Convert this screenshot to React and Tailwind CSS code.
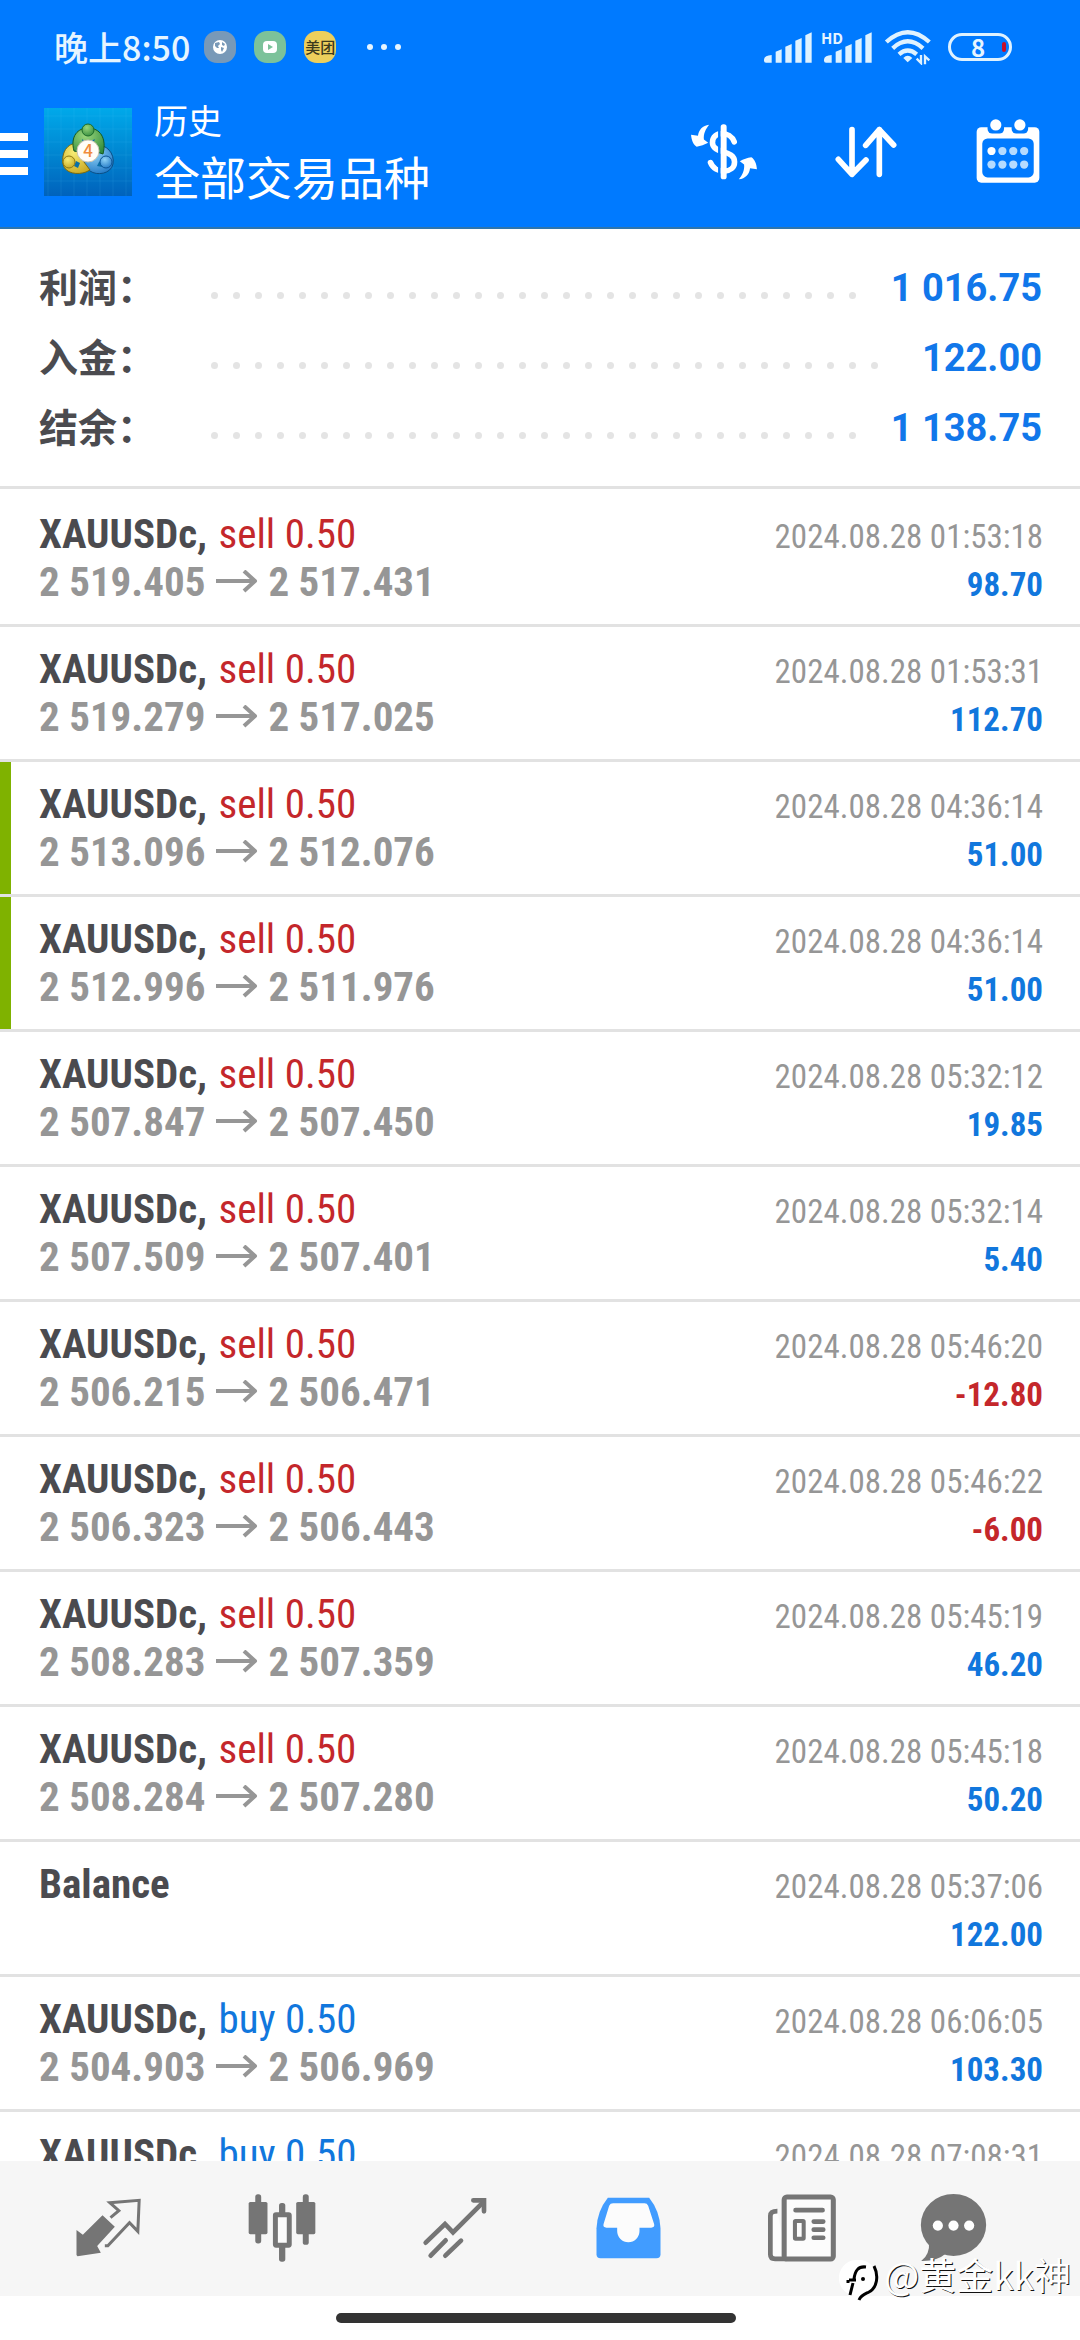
const deals = [
  { id: 1, side: "sell", open: "2 519.405", close: "2 517.431", time: "2024.08.28 01:53:18", profit: "98.70" },
  { id: 2, side: "sell", open: "2 519.279", close: "2 517.025", time: "2024.08.28 01:53:31", profit: "112.70" },
  { id: 3, side: "sell", open: "2 513.096", close: "2 512.076", time: "2024.08.28 04:36:14", profit: "51.00", marked: true },
  { id: 4, side: "sell", open: "2 512.996", close: "2 511.976", time: "2024.08.28 04:36:14", profit: "51.00", marked: true },
  { id: 5, side: "sell", open: "2 507.847", close: "2 507.450", time: "2024.08.28 05:32:12", profit: "19.85" },
  { id: 6, side: "sell", open: "2 507.509", close: "2 507.401", time: "2024.08.28 05:32:14", profit: "5.40" },
  { id: 7, side: "sell", open: "2 506.215", close: "2 506.471", time: "2024.08.28 05:46:20", profit: "-12.80" },
  { id: 8, side: "sell", open: "2 506.323", close: "2 506.443", time: "2024.08.28 05:46:22", profit: "-6.00" },
  { id: 9, side: "sell", open: "2 508.283", close: "2 507.359", time: "2024.08.28 05:45:19", profit: "46.20" },
  { id: 10, side: "sell", open: "2 508.284", close: "2 507.280", time: "2024.08.28 05:45:18", profit: "50.20" },
  { id: 11, side: "balance", time: "2024.08.28 05:37:06", profit: "122.00" },
  { id: 12, side: "buy", open: "2 504.903", close: "2 506.969", time: "2024.08.28 06:06:05", profit: "103.30" },
  { id: 13, side: "buy", time: "2024.08.28 07:08:31" },
];

const summary = [
  { label: "利润：", value: "1 016.75" },
  { label: "入金：", value: "122.00" },
  { label: "结余：", value: "1 138.75" },
];

// Status bar
function SignalIcon() {
  return (
    <svg viewBox="312 96 144 93" className="h-[31px] w-12" fill="#dff2ff">
      <path d="M335 188H318Q312 188 312 182V178Q314 166 335 165Z" />
      <path d="M347 188V155L365 148V188Z" />
      <path d="M376 188V140L395 132V188Z" />
      <path d="M406 188V122L425 114V188Z" />
      <path d="M436 188V106L455 97V188Z" />
    </svg>
  );
}

function WifiIcon() {
  return (
    <svg viewBox="672 90 144 108" className="h-9 w-12" fill="none" stroke="#dff2ff" strokeWidth="13">
      <path d="M679 129Q743 70 808 129" />
      <path d="M698 148Q743 106 789 148" />
      <path d="M717 166Q743 143 770 166" />
      <path d="M730 177Q743 164 757 177L743 190Z" fill="#dff2ff" stroke="none" />
      <path d="M783 166V192L768 178M795 196V172L809 184" stroke="#007aff" strokeWidth="16" />
      <path d="M783 168V192L770 179M795 196V172L808 184" strokeWidth="7" />
    </svg>
  );
}

function StatusBar() {
  return (
    <div className="flex h-[94px] items-center justify-between pl-[54px] pr-[68px] text-[#e6f5ff]">
      <div className="flex items-center">
        <span className="text-[34px] leading-10 font-medium">晚上8:50</span>
        <div className="ml-3.5 flex items-center gap-[18px]">
          <span className="flex size-8 items-center justify-center rounded-[13px] bg-[#7899b8]">
            <svg viewBox="0 0 16 16" className="size-4">
              <circle cx="8" cy="8" r="7" fill="#fff" />
              <path d="M3 4L7 3L8 5L6 7L7 9L5 9L3 7ZM10 3L13 5L12 7L10 6ZM9 8L12 9L10 13L9 11Z" fill="#7899b8" />
            </svg>
          </span>
          <span className="flex size-8 items-center justify-center rounded-[13px] bg-[#7cc29a]">
            <svg viewBox="0 0 16 14" className="h-[14px] w-4">
              <rect x="1" y="1" width="14" height="12" rx="4" fill="#fff" />
              <path d="M6 4L11 7L6 10Z" fill="#7cc29a" />
            </svg>
          </span>
          <span className="flex size-8 items-center justify-center rounded-[13px] bg-[#edcf5c] text-[15px] leading-8 font-medium text-[#3d3a1e]">
            美团
          </span>
        </div>
        <div className="ml-[31px] flex gap-2">
          <span className="size-[6px] rounded-full bg-[#e6f5ff]" />
          <span className="size-[6px] rounded-full bg-[#e6f5ff]" />
          <span className="size-[6px] rounded-full bg-[#e6f5ff]" />
        </div>
      </div>
      <div className="flex items-center">
        <SignalIcon />
        <div className="relative ml-3">
          <SignalIcon />
          <span className="absolute -top-1 -left-[3px] text-[15px] leading-5 font-bold">HD</span>
        </div>
        <div className="ml-3">
          <WifiIcon />
        </div>
        <div className="relative ml-4 flex h-7 w-16 items-center justify-center rounded-full border-[3px] border-[#dff2ff]">
          <span className="mr-1 text-[24px] leading-6 font-bold">8</span>
          <span className="absolute right-[3px] h-[10px] w-1 rounded-full bg-[#c4102c]" />
        </div>
      </div>
    </div>
  );
}

function AppLogo() {
  return (
    <svg viewBox="0 0 88 88" className="ml-4 size-[88px] shrink-0">
      <defs>
        <linearGradient id="tile" x1="0" y1="0" x2="0" y2="1">
          <stop offset="0" stopColor="#00a9ea" />
          <stop offset="0.5" stopColor="#0087d2" />
          <stop offset="1" stopColor="#0062bc" />
        </linearGradient>
        <radialGradient id="green" cx="0.4" cy="0.3" r="0.8">
          <stop offset="0" stopColor="#9ad67c" />
          <stop offset="1" stopColor="#2f8a3c" />
        </radialGradient>
        <radialGradient id="yellow" cx="0.4" cy="0.3" r="0.8">
          <stop offset="0" stopColor="#f7ec74" />
          <stop offset="1" stopColor="#c8a620" />
        </radialGradient>
        <radialGradient id="blue" cx="0.4" cy="0.3" r="0.8">
          <stop offset="0" stopColor="#8ed2f6" />
          <stop offset="1" stopColor="#1c74c4" />
        </radialGradient>
      </defs>
      <rect width="88" height="88" fill="url(#tile)" />
      <path
        d="M4 0V88M17 0V88M30 0V88M43 0V88M56 0V88M69 0V88M82 0V88M0 8H88M0 21H88M0 34H88M0 47H88M0 60H88M0 73H88"
        stroke="#5cc8f5"
        strokeOpacity="0.12"
      />
      {/* three seated figures around the badge */}
      <path d="M52 37C62 36 71 45 69 56C67 66 53 68 46 63C42 60 40 57 39 54Z" fill="url(#blue)" stroke="#0a4f86" />
      <path d="M36 36C25 33 17 43 19 56C21 66 34 67 42 64L46 62L40 54Z" fill="url(#yellow)" stroke="#7a6a10" />
      <path d="M30 43C26 28 34 20 44 20C56 20 63 30 59 46L53 44L35 44Z" fill="url(#green)" stroke="#14591f" />
      <path d="M38 31L43 35L51 31L49 36H39ZM32 53L36 55L34 60L30 58ZM55 54L59 52L58 59L53 58Z" fill="#0a6fa8" />
      <circle cx="44" cy="22" r="6" fill="url(#green)" stroke="#1d6b2a" />
      <circle cx="25" cy="54" r="6" fill="url(#yellow)" stroke="#8f7a14" />
      <circle cx="62" cy="54" r="6" fill="url(#blue)" stroke="#0d5596" />
      <circle cx="44" cy="43" r="11" fill="#fffdf8" stroke="#c9c4b4" />
      <text x="44" y="49" textAnchor="middle" fontSize="17" fontWeight="500" fill="#f08c3c">
        4
      </text>
    </svg>
  );
}

function CurrencyIcon() {
  const arrow = "M82 43C62 46 50 58 48 77L27 74C28 90 34 104 44 110C56 108 68 104 79 98L66 88C64 70 72 55 82 43Z";
  return (
    <svg viewBox="27 41 200 170" className="h-14 w-[66px]" fill="#fff">
      <path
        d="M158 95C146 62 92 60 92 98C92 132 159 118 159 156C159 192 100 194 86 158"
        fill="none"
        stroke="#fff"
        strokeWidth="17"
        strokeLinecap="round"
      />
      <path d="M113 50V202" stroke="#007aff" strokeWidth="8" />
      <rect x="117" y="42" width="18" height="167" rx="8" />
      <path d={arrow} />
      <path d={arrow} transform="rotate(180 127 126)" />
    </svg>
  );
}

function SortIcon() {
  return (
    <svg
      viewBox="522 377 186 156"
      className="h-[52px] w-[62px]"
      fill="none"
      stroke="#fff"
      strokeWidth="17"
      strokeLinecap="round"
      strokeLinejoin="round"
    >
      <path d="M573 388V522M532 477L573 522L615 479" />
      <path d="M655 522V388M614 435L655 388L698 434" />
    </svg>
  );
}

function CalendarIcon() {
  return (
    <svg viewBox="944 355 192 194" className="size-16" fill="#fff">
      <rect x="945" y="380" width="190" height="168" rx="14" />
      <rect x="962" y="414" width="156" height="118" rx="16" fill="#007aff" />
      {[1003, 1076].map((x) => (
        <g key={x}>
          <rect x={x - 25} y="355" width="50" height="44" rx="14" fill="#007aff" />
          <circle cx={x} cy="373" r="17" />
        </g>
      ))}
      {[990, 1023, 1056, 1089].map((x) => (
        <g key={x} fill={x === 990 ? "#fff" : "#b5dbff"}>
          <circle cx={x} cy="452" r="12.5" />
          <circle cx={x} cy="493" r="12.5" fill="#b5dbff" />
        </g>
      ))}
    </svg>
  );
}

function Header() {
  return (
    <header className="border-b-2 border-[#2f76ad] bg-[#007aff] pb-[17px]">
      <StatusBar />
      <div className="flex h-[116px] items-center pr-px text-white">
        <button className="flex w-7 flex-col gap-[9px] pt-1" aria-label="Menu">
          <span className="h-2 w-full bg-white" />
          <span className="h-2 w-full bg-white" />
          <span className="h-2 w-full bg-white" />
        </button>
        <AppLogo />
        <div className="ml-[22px] flex-1">
          <p className="text-[34px] leading-[46px]">历史</p>
          <h1 className="text-[46px] leading-[64px]">全部交易品种</h1>
        </div>
        <button className="flex w-[142px] justify-center" aria-label="Currency">
          <CurrencyIcon />
        </button>
        <button className="flex w-[142px] justify-center" aria-label="Sort">
          <SortIcon />
        </button>
        <button className="flex w-[142px] justify-center pb-0.5" aria-label="Period">
          <CalendarIcon />
        </button>
      </div>
    </header>
  );
}

// Dots that don't fit wrap onto a hidden second line
function DotLeader() {
  return (
    <div className="mr-5 flex h-[22px] flex-1 flex-wrap content-start overflow-hidden" aria-hidden="true">
      {Array.from({ length: 80 }, (_, i) => (
        <span key={i} className="flex h-[22px] w-[22px] items-end justify-center">
          <span className="size-[7px] rounded-full bg-[#e4e4e4]" />
        </span>
      ))}
    </div>
  );
}

function Summary() {
  return (
    <section className="border-b-[3px] border-[#e2e2e2] pt-6 pr-[38px] pb-[23px] pl-[39px]">
      {summary.map((row) => (
        <div key={row.label} className="flex h-[70px] items-center">
          <span className="w-[164px] pb-1.5 text-[39px] leading-[64px] font-bold text-[#4b4b4f]">{row.label}</span>
          <DotLeader />
          <span className="font-[Roboto] text-[38px] leading-[70px] font-bold text-[#1177ea]">{row.value}</span>
        </div>
      ))}
    </section>
  );
}

function DealRow({ deal }) {
  const isBalance = deal.side === "balance";
  const negative = deal.profit?.startsWith("-");

  return (
    <li className="relative border-b-[3px] border-[#e2e2e2] py-[18px] pr-[37px] pl-[39px] font-['Roboto_Condensed',sans-serif]">
      {deal.marked && <span className="absolute inset-y-0 left-0 w-[11px] bg-[#7fb200]" />}
      <div className="flex h-12 items-baseline justify-between">
        <span className="text-[41px] leading-[48px]">
          <b className="mr-0.5 font-bold text-[#4b4b4f]">{isBalance ? "Balance" : "XAUUSDc,"}</b>
          {!isBalance && (
            <span className={deal.side === "buy" ? "text-[#1177dd]" : "text-[#c4272b]"}> {deal.side} 0.50</span>
          )}
        </span>
        <time className="text-[33px] leading-[48px] text-[#969696]">{deal.time}</time>
      </div>
      <div className="flex h-12 items-baseline justify-between">
        <span className="text-[41px] leading-[48px] font-bold text-[#969696]">
          {deal.open && (
            <>
              {deal.open}
              <svg
                viewBox="0 0 42 26"
                className="mr-[10px] ml-[11px] inline h-[26px] w-[42px] align-baseline"
                fill="none"
                stroke="currentColor"
                strokeWidth="4"
              >
                <path d="M0 11H39" />
                <path d="M28 1L39 11L28 21" strokeLinejoin="round" />
              </svg>
              {deal.close}
            </>
          )}
          {!deal.open && "\u00a0"}
        </span>
        <span className={`text-[33px] leading-[48px] font-bold ${negative ? "text-[#c4272b]" : "text-[#1177dd]"}`}>
          {deal.profit}
        </span>
      </div>
    </li>
  );
}

// Bottom tab icons
function TradeIcon() {
  return (
    <svg viewBox="217 356 196 177" className="h-[59px] w-[67px]">
      <path d="M219 452L238 466L297 408L334 442L281 500L292 520L222 531L219 527Z" fill="#757575" />
      <path d="M321 415L346 394L319 370L407 363L403 456L378 430L313 499H304" fill="none" stroke="#757575" strokeWidth="9" />
    </svg>
  );
}

function ChartIcon() {
  return (
    <svg viewBox="714 341 204 206" className="h-[68px] w-[70px]" fill="#757575">
      <rect x="735" y="342" width="18" height="149" rx="8" />
      <rect x="715" y="365" width="57" height="98" rx="5" />
      <rect x="807" y="368" width="19" height="50" rx="8" />
      <rect x="807" y="490" width="19" height="56" rx="8" />
      <rect x="796" y="404" width="42" height="92" rx="2" fill="#fbfbfb" stroke="#757575" strokeWidth="15" />
      <rect x="879" y="342" width="18" height="153" rx="8" />
      <rect x="859" y="365" width="58" height="98" rx="5" />
    </svg>
  );
}

function TrendIcon() {
  return (
    <svg viewBox="1222 348 194 186" className="h-[62px] w-[66px]" fill="none" stroke="#757575" strokeWidth="14" strokeLinecap="round">
      <path d="M1231 485L1289 429L1313 454L1403 364" />
      <path d="M1374 358H1406V391" />
      <path d="M1246 524L1291 478M1290 524L1337 479" />
    </svg>
  );
}

function HistoryIcon() {
  return (
    <svg viewBox="156 348 196 186" className="h-[62px] w-[67px]">
      <path
        d="M192 350H316Q348 390 350 442V520Q350 532 338 532H170Q158 532 158 520V442Q160 390 192 350Z"
        fill="#419cff"
      />
      <path
        d="M208 367H302Q310 367 313 374L331 430Q333 440 322 440H287V450A33 33 0 0 1 220 450V440H188Q177 440 179 430L196 374Q199 367 208 367Z"
        fill="#fcfcfc"
      />
    </svg>
  );
}

function NewsIcon() {
  return (
    <svg viewBox="656 340 204 202" className="h-[68px] w-[70px]" fill="none" stroke="#757575" strokeWidth="14">
      <path d="M685 391Q664 391 664 405V520Q664 533 678 533H712" fill="#fcfcfc" />
      <rect x="705" y="349" width="146" height="184" rx="8" fill="#fcfcfc" strokeWidth="15" />
      <path d="M739 388H819M793 422H821M793 446H821M793 470H821" strokeLinecap="round" />
      <rect x="737" y="420" width="26" height="53" rx="2" strokeWidth="12" />
    </svg>
  );
}

function ChatIcon() {
  return (
    <svg viewBox="1101 341 196 200" className="h-[68px] w-[67px]">
      <path d="M1127 480Q1130 520 1104 538Q1150 539 1178 515Z" fill="#757575" />
      <ellipse cx="1199" cy="432" rx="96" ry="91" fill="#757575" />
      {[1153, 1199, 1245].map((x) => (
        <circle key={x} cx={x} cy="434" r="15" fill="#fff" />
      ))}
    </svg>
  );
}

const tabs = [
  { name: "Quotes", Icon: TradeIcon },
  { name: "Charts", Icon: ChartIcon },
  { name: "Trade", Icon: TrendIcon },
  { name: "History", Icon: HistoryIcon },
  { name: "News", Icon: NewsIcon },
];

function TabBar() {
  return (
    <nav className="flex h-[135px] shrink-0 items-center bg-[#f6f6f6] pr-[61px] pb-0.5 pl-[22px]">
      {tabs.map(({ name, Icon }) => (
        <button key={name} className="flex h-full flex-4 items-center justify-center" aria-label={name}>
          <Icon />
        </button>
      ))}
      <button className="flex h-full flex-3 items-center justify-center" aria-label="Messages">
        <ChatIcon />
      </button>
    </nav>
  );
}

function Watermark() {
  return (
    <div className="absolute right-[9px] bottom-[30px] flex items-center gap-[5px]">
      <svg viewBox="0 0 40 44" className="h-11 w-10">
        <path d="M20 2A18 18 0 1 1 20 38L18 43L16 38A18 18 0 0 1 20 2Z" fill="#fff" />
        <path d="M35 8C40 18 38 30 30 34C26 36 22 37 20 42" fill="none" stroke="#000" strokeWidth="3" />
        <path d="M27 9C19 8 16 13 15 21M10 22H17M14 25L11 37M9 22V25" fill="none" stroke="#000" strokeWidth="3" />
        <circle cx="24" cy="21" r="2" />
      </svg>
      <span className="pb-3 text-[37px] leading-[48px] text-white [text-shadow:1px_1px_0_#111]">@黄金kk神</span>
    </div>
  );
}

export default function App() {
  return (
    <div className="relative flex h-screen flex-col overflow-hidden bg-white font-['Noto_Sans_CJK_SC',sans-serif]">
      <Header />
      <Summary />
      <ul className="min-h-0 flex-1 overflow-hidden pt-[3px]">
        {deals.map((deal) => (
          <DealRow key={deal.id} deal={deal} />
        ))}
      </ul>
      <TabBar />
      <div className="flex h-11 shrink-0 items-start justify-center bg-white pt-[17px] pr-2">
        <div className="h-[10px] w-[400px] rounded-full bg-[#333]" />
      </div>
      <Watermark />
    </div>
  );
}
